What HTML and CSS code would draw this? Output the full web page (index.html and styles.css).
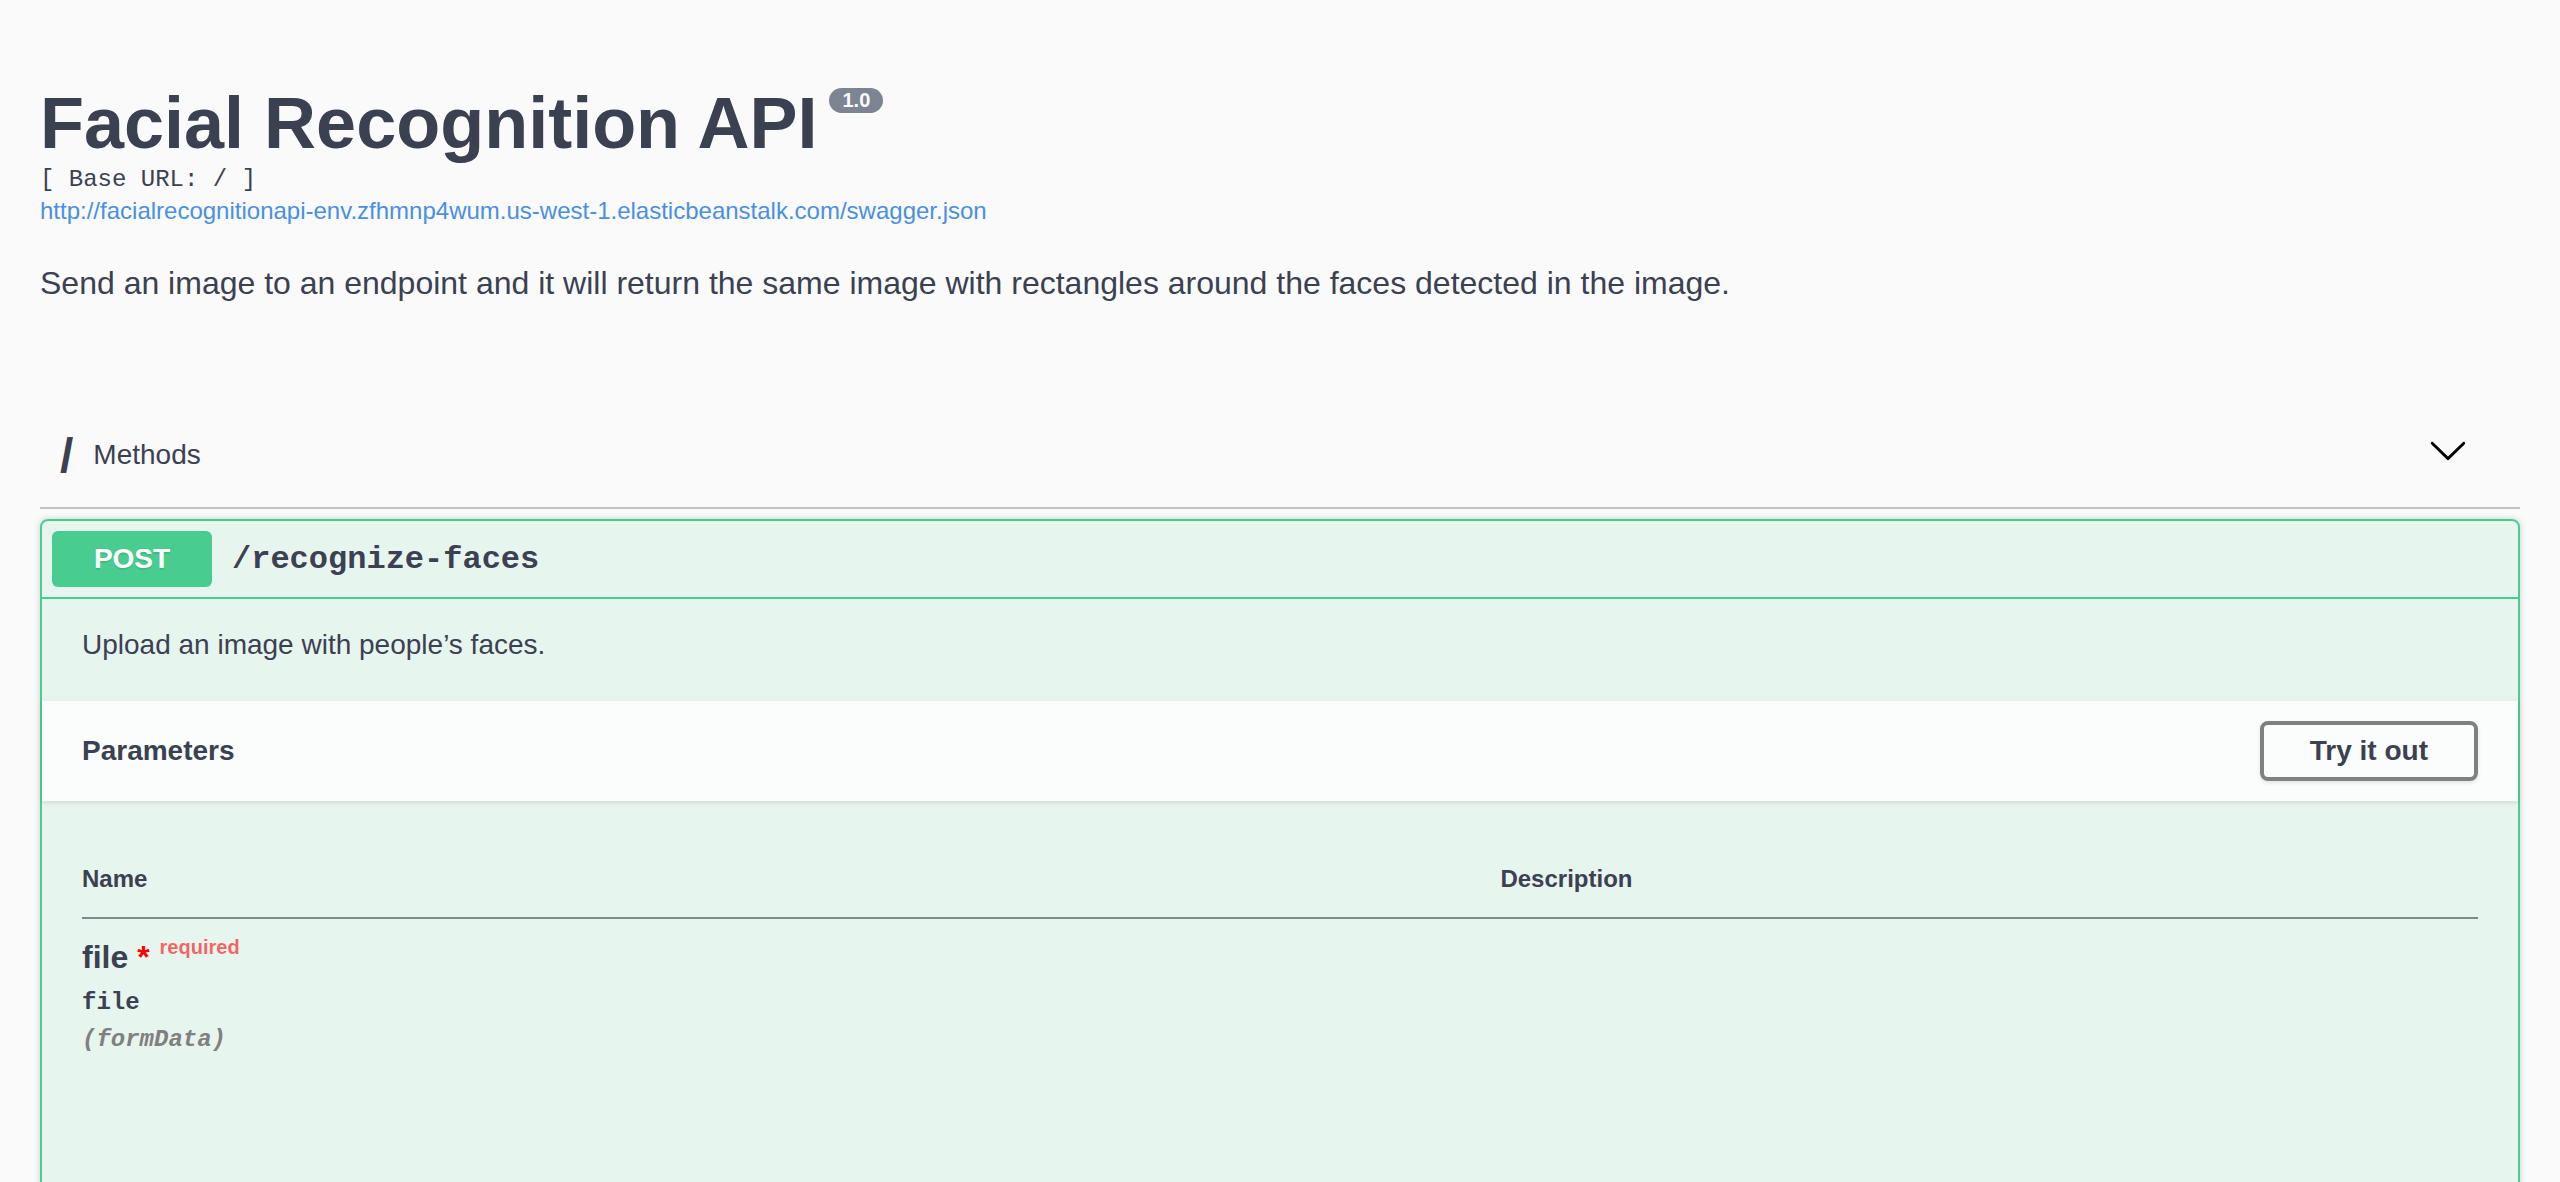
FILE: index.html
```html
<!DOCTYPE html>
<html lang="en">
<head>
<meta charset="utf-8">
<title>Swagger UI</title>
<link rel="stylesheet" href="styles.css">
</head>
<body>
<div class="swagger-ui">
  <div class="wrapper">
    <section class="info">
      <hgroup class="main">
        <h2 class="title">Facial Recognition API<small class="version">1.0</small></h2>
        <pre class="base-url">[ Base URL: / ]</pre>
        <a class="spec-link" href="#">http://facialrecognitionapi-env.zfhmnp4wum.us-west-1.elasticbeanstalk.com/swagger.json</a>
      </hgroup>
      <div class="description">
        <p>Send an image to an endpoint and it will return the same image with rectangles around the faces detected in the image.</p>
      </div>
    </section>

    <section class="tag-section">
      <h4 class="opblock-tag">
        <span class="tag-name">/</span>
        <small class="tag-desc">Methods</small>
        <button class="expand-operation" type="button" aria-label="Collapse">
          <svg class="arrow" width="40" height="40" viewBox="0 0 20 20" aria-hidden="true">
            <path d="M17.418 6.109c.272-.268.709-.268.979 0s.271.701 0 .969l-7.908 7.83c-.27.268-.707.268-.979 0l-7.908-7.83c-.27-.268-.27-.701 0-.969.271-.268.709-.268.979 0L10 13.25l7.418-7.141z"/>
          </svg>
        </button>
      </h4>

      <div class="opblock opblock-post">
        <div class="opblock-summary">
          <span class="method">POST</span>
          <span class="path">/recognize-faces</span>
        </div>
        <div class="opblock-body">
          <div class="opblock-description">
            <p>Upload an image with people’s faces.</p>
          </div>
          <div class="section-header">
            <h4 class="section-title">Parameters</h4>
            <button class="btn try-out" type="button">Try it out</button>
          </div>
          <div class="table-container">
            <table class="parameters">
              <thead>
                <tr>
                  <th class="col-name">Name</th>
                  <th class="col-desc">Description</th>
                </tr>
              </thead>
              <tbody>
                <tr>
                  <td class="col-name">
                    <div class="param-name">file<span class="star">&nbsp;*</span><span class="req">required</span></div>
                    <div class="param-type">file</div>
                    <div class="param-in">(formData)</div>
                  </td>
                  <td class="col-desc"></td>
                </tr>
              </tbody>
            </table>
          </div>
        </div>
      </div>
    </section>
  </div>
</div>
</body>
</html>
```

FILE: styles.css
```css
html, body {
  margin: 0;
  padding: 0;
  background: #fafafa;
}

.swagger-ui {
  font-family: "Liberation Sans", Arial, sans-serif;
  color: #3b4151;
}

.wrapper {
  padding: 0 40px;
}

/* ---------- info ---------- */
.info {
  margin: 82px 0 95px;
}

.main {
  margin: 0;
  font-size: 24px;
}

.title {
  margin: 0;
  font-size: 72px;
  font-weight: 700;
  line-height: normal;
  color: #3b4151;
}

.version {
  display: inline-block;
  vertical-align: top;
  margin: 6px 0 0 12px;
  padding: 4px 13px;
  border-radius: 114px;
  background: #7d8492;
  color: #fafafa;
  font-size: 20px;
  font-weight: 700;
  line-height: 17px;
}

.base-url {
  margin: 2px 0 0;
  font-family: "Liberation Mono", "Courier New", monospace;
  font-size: 24px;
  font-weight: 400;
  line-height: normal;
  color: #3b4151;
}

.spec-link {
  display: inline-block;
  margin-top: 4px;
  font-size: 24px;
  line-height: normal;
  color: #4990e2;
  text-decoration: none;
}

.description p {
  margin: 40px 0 0;
  font-size: 32px;
  line-height: normal;
}

/* ---------- tag ---------- */
.opblock-tag {
  display: flex;
  align-items: center;
  box-sizing: border-box;
  height: 112px;
  margin: 0 0 10px;
  padding: 6px 40px 0 20px;
  border-bottom: 2px solid rgba(59, 65, 81, 0.3);
  font-size: 48px;
  font-weight: 400;
  color: #3b4151;
}

.tag-name {
  font-weight: 700;
  line-height: normal;
}

.tag-desc {
  flex: 1;
  padding: 0 20px;
  font-size: 28px;
  font-weight: 400;
}

.expand-operation {
  border: none;
  background: none;
  padding: 2px 12px;
  margin: 0 0 10px;
  cursor: pointer;
}

.arrow {
  display: block;
  fill: #000;
}

/* ---------- opblock ---------- */
.opblock {
  margin: 0 0 30px;
  border: 2px solid #49cc90;
  border-radius: 8px;
  background: rgba(73, 204, 144, 0.1);
  box-shadow: 0 0 6px rgba(0, 0, 0, 0.19);
}

.opblock-summary {
  display: flex;
  align-items: center;
  padding: 10px;
  border-bottom: 2px solid #49cc90;
}

.method {
  box-sizing: border-box;
  min-width: 160px;
  padding: 12px 30px;
  border-radius: 6px;
  background: #49cc90;
  color: #fff;
  font-size: 28px;
  font-weight: 700;
  text-align: center;
  line-height: normal;
  text-shadow: 0 2px 0 rgba(0, 0, 0, 0.1);
}

.path {
  padding: 0 20px;
  font-family: "Liberation Mono", "Courier New", monospace;
  font-size: 32px;
  font-weight: 700;
  color: #3b4151;
}

.opblock-description {
  margin: 0 0 10px;
  padding: 30px 40px;
}

.opblock-description p {
  margin: 0;
  font-size: 28px;
  line-height: normal;
}

.section-header {
  display: flex;
  align-items: center;
  box-sizing: border-box;
  min-height: 100px;
  padding: 16px 40px;
  background: rgba(255, 255, 255, 0.8);
  box-shadow: 0 2px 4px rgba(0, 0, 0, 0.1);
}

.section-title {
  flex: 1;
  margin: 0;
  font-size: 28px;
  font-weight: 700;
}

.btn {
  padding: 10px 46px;
  border: 4px solid #808080;
  border-radius: 8px;
  background: transparent;
  box-shadow: 0 2px 4px rgba(0, 0, 0, 0.1);
  font-family: "Liberation Sans", Arial, sans-serif;
  font-size: 28px;
  font-weight: 700;
  line-height: normal;
  color: #3b4151;
  cursor: pointer;
}

/* ---------- parameters table ---------- */
.table-container {
  padding: 40px 40px 320px;
}

.parameters {
  width: 100%;
  border-collapse: collapse;
}

.parameters th {
  padding: 24px 0;
  text-align: left;
  font-size: 24px;
  font-weight: 700;
  line-height: normal;
  color: #3b4151;
  border-bottom: 2px solid rgba(59, 65, 81, 0.37);
}

.parameters th.col-name {
  width: 59.2%;
}

.parameters td {
  padding: 20px 0 0;
  vertical-align: top;
}

.param-name {
  font-size: 32px;
  font-weight: 700;
  line-height: normal;
  color: #3b4151;
}

.star {
  color: red;
}

.req {
  position: relative;
  top: -14px;
  padding: 0 10px;
  font-size: 20px;
  font-weight: 700;
  color: rgba(255, 0, 0, 0.6);
}

.param-type {
  padding: 13px 0 10px;
  font-family: "Liberation Mono", "Courier New", monospace;
  font-size: 24px;
  font-weight: 700;
  line-height: normal;
  color: #3b4151;
}

.param-in {
  font-family: "Liberation Mono", "Courier New", monospace;
  font-size: 24px;
  font-style: italic;
  font-weight: 700;
  line-height: normal;
  color: #808080;
}
```
